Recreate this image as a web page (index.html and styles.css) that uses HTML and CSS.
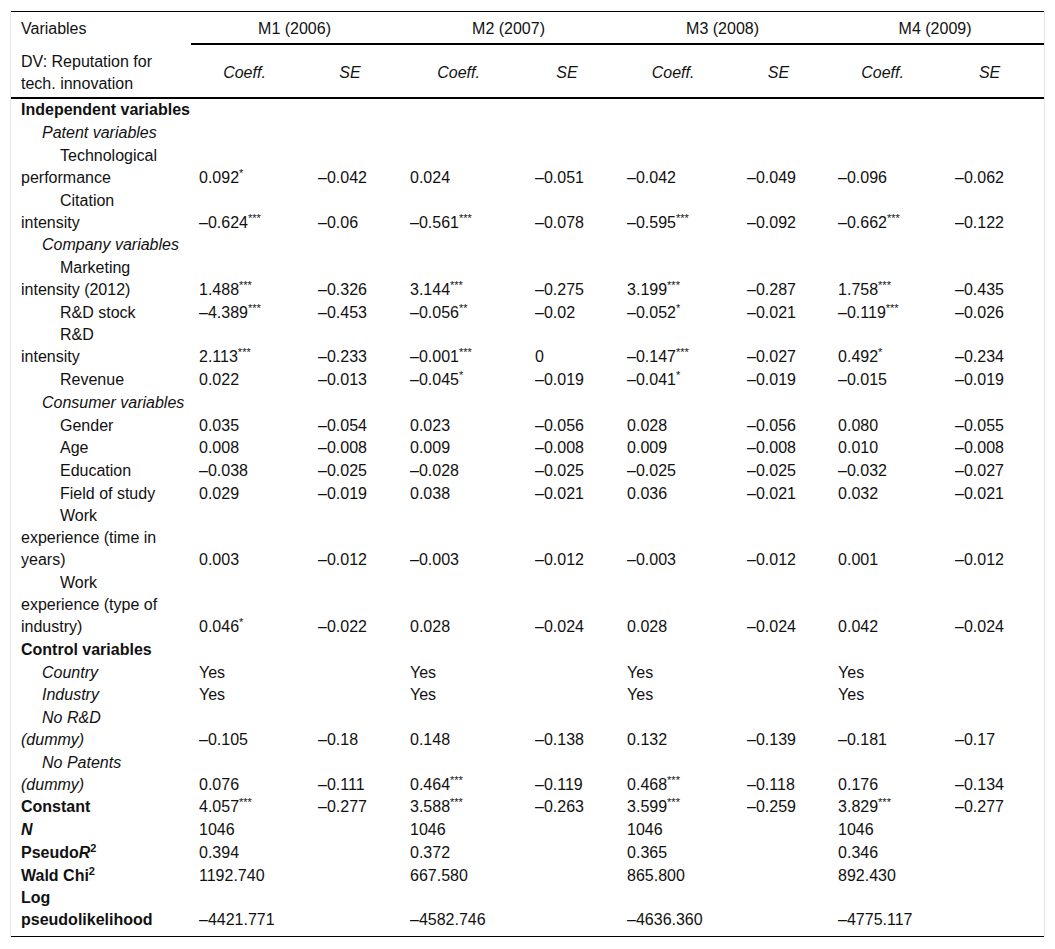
FILE: index.html
```html
<!DOCTYPE html>
<html lang="en">
<head>
<meta charset="utf-8">
<title>Regression table</title>
<link rel="stylesheet" href="styles.css">
</head>
<body>
<div class="wrap">
<table class="tbl">
<colgroup>
<col class="w0"><col class="w1"><col class="w2"><col class="w3"><col class="w4"><col class="w5"><col class="w6"><col class="w7"><col class="w8">
</colgroup>
<thead>
<tr class="h1">
<th class="lab">Variables</th>
<th colspan="2" class="m">M1 (2006)</th>
<th colspan="2" class="m">M2 (2007)</th>
<th colspan="2" class="m">M3 (2008)</th>
<th colspan="2" class="m">M4 (2009)</th>
</tr>
<tr class="h2">
<th class="lab">DV: Reputation for<br>tech. innovation</th>
<th class="sub">Coeff.</th><th class="sub">SE</th>
<th class="sub">Coeff.</th><th class="sub">SE</th>
<th class="sub">Coeff.</th><th class="sub">SE</th>
<th class="sub">Coeff.</th><th class="sub">SE</th>
</tr>
</thead>
<tbody>
<tr><td colspan="9" class="lab b">Independent variables</td></tr>
<tr><td colspan="9" class="lab i1"><i>Patent variables</i></td></tr>
<tr><td class="lab i2">Technological<br>performance</td><td>0.092<sup>*</sup></td><td>–0.042</td><td>0.024</td><td>–0.051</td><td>–0.042</td><td>–0.049</td><td>–0.096</td><td>–0.062</td></tr>
<tr><td class="lab i2">Citation<br>intensity</td><td>–0.624<sup>***</sup></td><td>–0.06</td><td>–0.561<sup>***</sup></td><td>–0.078</td><td>–0.595<sup>***</sup></td><td>–0.092</td><td>–0.662<sup>***</sup></td><td>–0.122</td></tr>
<tr><td colspan="9" class="lab i1"><i>Company variables</i></td></tr>
<tr><td class="lab i2">Marketing<br>intensity (2012)</td><td>1.488<sup>***</sup></td><td>–0.326</td><td>3.144<sup>***</sup></td><td>–0.275</td><td>3.199<sup>***</sup></td><td>–0.287</td><td>1.758<sup>***</sup></td><td>–0.435</td></tr>
<tr><td class="lab i2">R&amp;D stock</td><td>–4.389<sup>***</sup></td><td>–0.453</td><td>–0.056<sup>**</sup></td><td>–0.02</td><td>–0.052<sup>*</sup></td><td>–0.021</td><td>–0.119<sup>***</sup></td><td>–0.026</td></tr>
<tr><td class="lab i2">R&amp;D<br>intensity</td><td>2.113<sup>***</sup></td><td>–0.233</td><td>–0.001<sup>***</sup></td><td>0</td><td>–0.147<sup>***</sup></td><td>–0.027</td><td>0.492<sup>*</sup></td><td>–0.234</td></tr>
<tr><td class="lab i2">Revenue</td><td>0.022</td><td>–0.013</td><td>–0.045<sup>*</sup></td><td>–0.019</td><td>–0.041<sup>*</sup></td><td>–0.019</td><td>–0.015</td><td>–0.019</td></tr>
<tr><td colspan="9" class="lab i1"><i>Consumer variables</i></td></tr>
<tr><td class="lab i2">Gender</td><td>0.035</td><td>–0.054</td><td>0.023</td><td>–0.056</td><td>0.028</td><td>–0.056</td><td>0.080</td><td>–0.055</td></tr>
<tr><td class="lab i2">Age</td><td>0.008</td><td>–0.008</td><td>0.009</td><td>–0.008</td><td>0.009</td><td>–0.008</td><td>0.010</td><td>–0.008</td></tr>
<tr><td class="lab i2">Education</td><td>–0.038</td><td>–0.025</td><td>–0.028</td><td>–0.025</td><td>–0.025</td><td>–0.025</td><td>–0.032</td><td>–0.027</td></tr>
<tr><td class="lab i2">Field of study</td><td>0.029</td><td>–0.019</td><td>0.038</td><td>–0.021</td><td>0.036</td><td>–0.021</td><td>0.032</td><td>–0.021</td></tr>
<tr><td class="lab i2">Work<br>experience (time in<br>years)</td><td>0.003</td><td>–0.012</td><td>–0.003</td><td>–0.012</td><td>–0.003</td><td>–0.012</td><td>0.001</td><td>–0.012</td></tr>
<tr><td class="lab i2">Work<br>experience (type of<br>industry)</td><td>0.046<sup>*</sup></td><td>–0.022</td><td>0.028</td><td>–0.024</td><td>0.028</td><td>–0.024</td><td>0.042</td><td>–0.024</td></tr>
<tr><td colspan="9" class="lab b">Control variables</td></tr>
<tr><td class="lab i1"><i>Country</i></td><td>Yes</td><td></td><td>Yes</td><td></td><td>Yes</td><td></td><td>Yes</td><td></td></tr>
<tr><td class="lab i1"><i>Industry</i></td><td>Yes</td><td></td><td>Yes</td><td></td><td>Yes</td><td></td><td>Yes</td><td></td></tr>
<tr><td class="lab i1"><i>No R&amp;D<br>(dummy)</i></td><td>–0.105</td><td>–0.18</td><td>0.148</td><td>–0.138</td><td>0.132</td><td>–0.139</td><td>–0.181</td><td>–0.17</td></tr>
<tr><td class="lab i1"><i>No Patents<br>(dummy)</i></td><td>0.076</td><td>–0.111</td><td>0.464<sup>***</sup></td><td>–0.119</td><td>0.468<sup>***</sup></td><td>–0.118</td><td>0.176</td><td>–0.134</td></tr>
<tr><td class="lab b">Constant</td><td>4.057<sup>***</sup></td><td>–0.277</td><td>3.588<sup>***</sup></td><td>–0.263</td><td>3.599<sup>***</sup></td><td>–0.259</td><td>3.829<sup>***</sup></td><td>–0.277</td></tr>
<tr><td class="lab b"><i>N</i></td><td>1046</td><td></td><td>1046</td><td></td><td>1046</td><td></td><td>1046</td><td></td></tr>
<tr><td class="lab b">Pseudo<i>R</i><sup class="pw">2</sup></td><td>0.394</td><td></td><td>0.372</td><td></td><td>0.365</td><td></td><td>0.346</td><td></td></tr>
<tr><td class="lab b">Wald Chi<sup class="pw">2</sup></td><td>1192.740</td><td></td><td>667.580</td><td></td><td>865.800</td><td></td><td>892.430</td><td></td></tr>
<tr class="last"><td class="lab b">Log<br>pseudolikelihood</td><td>–4421.771</td><td></td><td>–4582.746</td><td></td><td>–4636.360</td><td></td><td>–4775.117</td><td></td></tr>
</tbody>
</table>
</div>
</body>
</html>
```
FILE: styles.css
```css
* { box-sizing: border-box; }
html, body { background: #fff; }
body {
  margin: 10px 10px 0 10px;
  font-family: "Liberation Sans", Arial, Helvetica, sans-serif;
  font-size: 16px;
  color: #111;
}
.wrap {
  width: 1035px;
  border-left: 1px solid #e6e6e6;
  border-right: 1px solid #e6e6e6;
  padding-top: 1px;
}
.tbl {
  width: 1033px;
  table-layout: fixed;
  border-collapse: separate;
  border-spacing: 0;
  border-top: 1px solid #000;
  border-bottom: 1px solid #000;
}
.w0 { width: 180px; }
.w1 { width: 119px; }
.w2 { width: 92px; }
.w3 { width: 125px; }
.w4 { width: 92px; }
.w5 { width: 120px; }
.w6 { width: 91px; }
.w7 { width: 117px; }
.w8 { width: 97px; }

th, td {
  font-weight: normal;
  line-height: 22px;
  padding: 0.36px 0 0.36px 8px;
  text-align: left;
  vertical-align: bottom;
  white-space: nowrap;
}
.lab { padding-left: 10px; padding-right: 28px; }
.b { font-weight: bold; }
.i1 { text-indent: 21px; }
.i2 { text-indent: 39px; }

.h1 th { padding-top: 6px; padding-bottom: 3px; vertical-align: middle; }
.h1 .m {
  text-align: center;
  padding-left: 8px;
  padding-right: 12px;
  border-bottom: 2px solid #000;
}
.h1 .lab { border-bottom: 2px solid transparent; }
.h2 th {
  padding-top: 6px;
  padding-bottom: 2px;
  vertical-align: middle;
  border-bottom: 2px solid #000;
}
.h2 .sub {
  font-style: italic;
  text-align: center;
  padding-left: 8px;
  padding-right: 20px;
}
sup {
  font-size: 11px;
  line-height: 0;
  vertical-align: 6px;
}
sup.pw { font-size: 11px; font-weight: bold; vertical-align: 6px; }
.last td { padding-bottom: 5px; }
```
